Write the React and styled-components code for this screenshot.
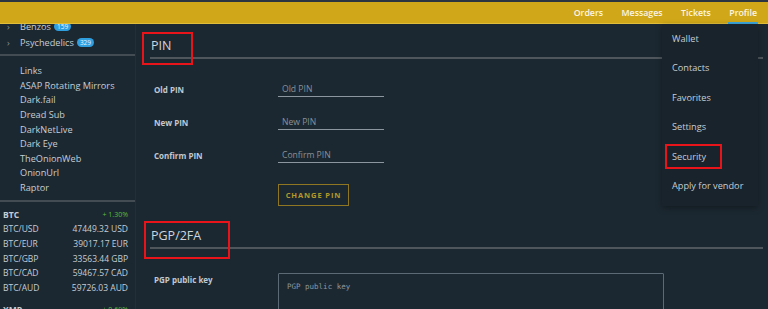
import React from "react";
import styled, { createGlobalStyle } from "styled-components";

const Global = createGlobalStyle`
  html, body { margin: 0; padding: 0; }
  body {
    background: #1c2831;
    font-family: "Open Sans", "DejaVu Sans", sans-serif;
    overflow: hidden;
  }
`;

const Page = styled.div`
  position: relative;
  width: 768px;
  height: 309px;
  overflow: hidden;
  display: flex;
  flex-direction: column;
`;

const TopBar = styled.header`
  position: relative;
  z-index: 2;
  height: 21px;
  border-top: 2px solid #2b3541;
  border-bottom: 1px solid #e0bd3a;
  background: #d0a718;
  display: flex;
  justify-content: flex-end;
  padding-right: 10px;
`;

const NavItem = styled.a`
  position: relative;
  display: flex;
  align-items: center;
  padding: 0 ${(p) => (p.$last ? "1px" : "9px")} 0 9.5px;
  color: #fbf6e6;
  font-size: 8.8px;
  font-weight: 600;
  text-decoration: none;
  &::after {
    content: "";
    display: ${(p) => (p.$active ? "block" : "none")};
    position: absolute;
    left: 8px;
    right: 0;
    bottom: -1px;
    height: 2px;
    background: #3ba6dd;
  }
`;

const Body = styled.div`
  flex: 1;
  display: flex;
  min-height: 0;
`;

const Sidebar = styled.aside`
  width: 135px;
  flex-shrink: 0;
  border-right: 1px solid #222e38;
  overflow: hidden;
`;

const SideInner = styled.div`
  margin-top: -6px;
`;

const CatRow = styled.div`
  display: flex;
  align-items: center;
  height: 16px;
  padding-left: 7px;
  color: #c5ced5;
  font-size: 9.2px;
`;

const Chevron = styled.span`
  width: 13px;
  color: #8a959d;
  font-size: 9px;
`;

const Badge = styled.span`
  margin-left: 3px;
  padding: 0 3px;
  border-radius: 5px;
  background: #2f9fe0;
  color: #e6f4ff;
  font-size: 6.5px;
  line-height: 9px;
`;

const Divider = styled.div`
  height: 2px;
  background: #434c53;
  margin: ${(p) => p.$m || "5px 0"};
`;

const LinkList = styled.div`
  padding: 8px 0 0 20px;
  display: flex;
  flex-direction: column;
`;

const SideLink = styled.a`
  height: 14.65px;
  line-height: 14.65px;
  color: #c5ced5;
  font-size: 9.2px;
`;

const Rates = styled.div`
  padding: 5px 7px 0 3px;
`;

const RateRow = styled.div`
  display: flex;
  justify-content: space-between;
  align-items: center;
  height: ${(p) => (p.$gap ? "20px" : "14.7px")};
  color: #c5ced5;
  font-size: 8.5px;
  font-weight: ${(p) => (p.$head ? 700 : 400)};
  padding-top: ${(p) => (p.$gap ? "5px" : "0")};
`;

const Change = styled.span`
  color: #5dbb3c;
  font-size: 7px;
  font-weight: 400;
`;

const Main = styled.main`
  flex: 1;
  padding: 14px 5px 0 14px;
`;

const SectionHead = styled.div`
  position: relative;
  color: #ced5db;
  font-size: 12.5px;
  line-height: 16px;
  padding: 0 0 3px 1px;
  border-bottom: 2px solid #4f575d;
  margin-bottom: ${(p) => p.$mb || "20px"};
`;

const Mark = styled.span`
  position: absolute;
  left: ${(p) => p.$l}px;
  top: ${(p) => p.$t}px;
  width: ${(p) => p.$w}px;
  height: ${(p) => p.$h}px;
  border: 2px solid #e8141a;
  box-sizing: border-box;
  pointer-events: none;
`;

const FormRow = styled.div`
  display: flex;
  align-items: center;
  height: 33px;
`;

const FieldLabel = styled.label`
  width: 124px;
  padding-left: 4px;
  color: #c0c9d0;
  font-size: 8px;
  font-weight: 700;
`;

const Input = styled.input`
  width: 106px;
  height: 14px;
  padding: 0 0 1px 4px;
  box-sizing: border-box;
  background: transparent;
  border: none;
  border-bottom: 1px solid #8b969e;
  color: #c5ced5;
  font-family: inherit;
  font-size: 8.6px;
  outline: none;
  &::placeholder { color: #87929a; }
`;

const ButtonRow = styled.div`
  padding: 9px 0 0 128px;
  margin-bottom: 22px;
`;

const GoldButton = styled.button`
  width: 71px;
  height: 22px;
  background: transparent;
  border: 1px solid #8e7623;
  color: #b79829;
  font-family: inherit;
  font-size: 7.5px;
  font-weight: 700;
  letter-spacing: 0.9px;
`;

const TextRow = styled.div`
  display: flex;
  align-items: flex-start;
`;

const TopLabel = styled(FieldLabel)`
  padding-top: 1px;
`;

const TextArea = styled.textarea`
  width: 386px;
  height: 60px;
  box-sizing: border-box;
  padding: 8px 8px;
  background: transparent;
  border: 1px solid #5b6a75;
  border-radius: 1px;
  color: #c5ced5;
  font-family: "DejaVu Sans Mono", "Liberation Mono", monospace;
  font-size: 7.5px;
  resize: none;
  &::placeholder { color: #8d979e; }
`;

const Dropdown = styled.div`
  position: absolute;
  z-index: 3;
  top: 24px;
  right: 10px;
  width: 96px;
  padding: 0 0 6px;
  background: #19232b;
  box-shadow: 0 2px 6px rgba(0, 0, 0, 0.35);
`;

const DropItem = styled.a`
  position: relative;
  display: block;
  height: 29.4px;
  line-height: 29.4px;
  padding-left: 10px;
  color: #c5ced5;
  font-size: 9.2px;
`;

const categories = [
  { name: "Benzos", count: "159" },
  { name: "Psychedelics", count: "329" },
];

const links = [
  "Links",
  "ASAP Rotating Mirrors",
  "Dark.fail",
  "Dread Sub",
  "DarkNetLive",
  "Dark Eye",
  "TheOnionWeb",
  "OnionUrl",
  "Raptor",
];

const rates = [
  ["BTC/USD", "47449.32 USD"],
  ["BTC/EUR", "39017.17 EUR"],
  ["BTC/GBP", "33563.44 GBP"],
  ["BTC/CAD", "59467.57 CAD"],
  ["BTC/AUD", "59726.03 AUD"],
];

const menu = ["Wallet", "Contacts", "Favorites", "Settings", "Security", "Apply for vendor"];

export default function App() {
  return (
    <Page>
      <Global />
      <TopBar>
        <NavItem>Orders</NavItem>
        <NavItem>Messages</NavItem>
        <NavItem>Tickets</NavItem>
        <NavItem $active $last>Profile</NavItem>
      </TopBar>
      <Body>
        <Sidebar>
          <SideInner>
            {categories.map((c) => (
              <CatRow key={c.name}>
                <Chevron>›</Chevron>
                {c.name}
                <Badge>{c.count}</Badge>
              </CatRow>
            ))}
            <Divider $m="4px 0 0" />
            <LinkList>
              {links.map((l) => (
                <SideLink key={l}>{l}</SideLink>
              ))}
            </LinkList>
            <Divider $m="4px 0 0" />
            <Rates>
              <RateRow $head>
                <span>BTC</span>
                <Change>+ 1.30%</Change>
              </RateRow>
              {rates.map(([k, v]) => (
                <RateRow key={k}>
                  <span>{k}</span>
                  <span>{v}</span>
                </RateRow>
              ))}
              <RateRow $head $gap>
                <span>XMR</span>
                <Change>+ 0.69%</Change>
              </RateRow>
            </Rates>
          </SideInner>
        </Sidebar>
        <Main>
          <SectionHead $mb="14px">
            PIN
            <Mark $l={-8} $t={-6} $w={51} $h={33} />
          </SectionHead>
          <FormRow>
            <FieldLabel>Old PIN</FieldLabel>
            <Input placeholder="Old PIN" />
          </FormRow>
          <FormRow>
            <FieldLabel>New PIN</FieldLabel>
            <Input placeholder="New PIN" />
          </FormRow>
          <FormRow>
            <FieldLabel>Confirm PIN</FieldLabel>
            <Input placeholder="Confirm PIN" />
          </FormRow>
          <ButtonRow>
            <GoldButton>CHANGE PIN</GoldButton>
          </ButtonRow>
          <SectionHead $mb="24px">
            PGP/2FA
            <Mark $l={-6} $t={-7} $w={86} $h={38} />
          </SectionHead>
          <TextRow>
            <TopLabel>PGP public key</TopLabel>
            <TextArea placeholder="PGP public key" />
          </TextRow>
        </Main>
      </Body>
      <Dropdown>
        {menu.map((m) => (
          <DropItem key={m}>
            {m}
            {m === "Security" && <Mark $l={3} $t={2} $w={57} $h={25} />}
          </DropItem>
        ))}
      </Dropdown>
    </Page>
  );
}
